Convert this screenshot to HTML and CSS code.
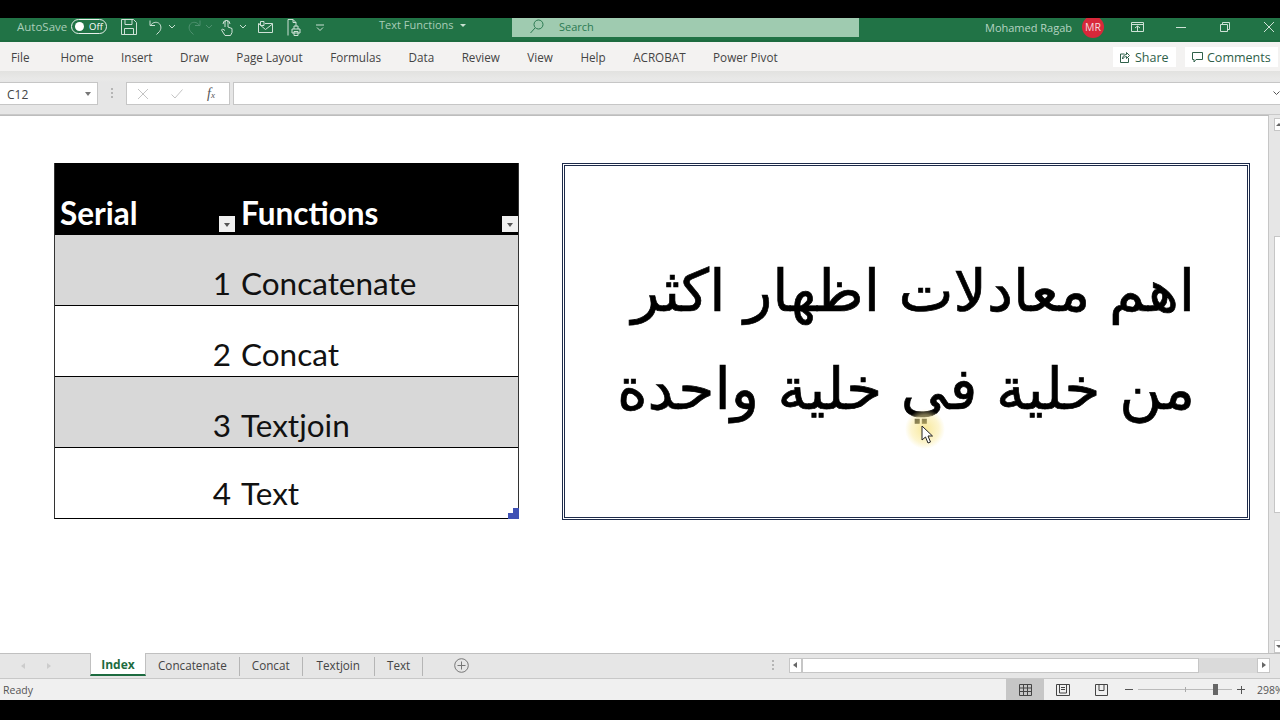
FILE: index.html
```html
<!DOCTYPE html>
<html lang="en">
<head>
    <meta charset="UTF-8">
    <title>Text Functions - Excel</title>
    <link rel="stylesheet" href="styles.css">
</head>
<body>

<div class="topblack"></div>

<div class="titlebar">
    <div class="qat">
        <span class="autosave">AutoSave</span>
        <span class="toggle"><i></i><b>Off</b></span>
        <svg class="qicon save" width="16" height="16" viewBox="0 0 16 16"><path d="M.5.500h12l3 3v12H.5zM4 .5v5h7v-5M3.500 15.500v-6h9v6" /></svg>
        <svg class="qicon undo" width="15" height="16" viewBox="0 0 15 16"><path d="M1 1.500v5h5M1.500 6.500c2-3 5-4 8-2.500 3 2 3 6 1 8.500l-3 3" /></svg>
        <svg class="qcaret c1st" width="6" height="4" viewBox="0 0 6 4"><path d="M0 0l3 3 3-3" /></svg>
        <svg class="qicon redo dim" width="15" height="16" viewBox="0 0 15 16"><path d="M14 1.500v5H9M13.500 6.500c-2-3-5-4-8-2.500-3 2-3 6-1 8.500l3 3" /></svg>
        <svg class="qcaret c1st dim" width="6" height="4" viewBox="0 0 6 4"><path d="M0 0l3 3 3-3" /></svg>
        <svg class="qicon touch" width="12" height="17" viewBox="0 0 12 17"><path d="M4 8V3a1.500 1.500 0 0 1 3 0v5l4 1.500v4l-1.500 3H4L.5 11l1-1L4 11.500M2 5a3.500 3.500 0 0 1 7 0" /></svg>
        <svg class="qcaret c2nd" width="6" height="4" viewBox="0 0 6 4"><path d="M0 0l3 3 3-3" /></svg>
        <svg class="qicon mail" width="15" height="12" viewBox="0 0 15 12"><path d="M7 2.500h7.500v9H.5v-9h1M1 3l6.500 5.500L14.500 3M2.500.5h3.500v4H2.500z" /></svg>
        <svg class="qicon print" width="14" height="17" viewBox="0 0 14 17"><path d="M1 16.500V.5h5l3 3v4M6 .5v3h3M5 10h8v4H5zM7 10V7h4v3M7 12.500h4v4H7z" /></svg>
        <svg class="qcaret more" width="8" height="7" viewBox="0 0 8 7"><path d="M0 1h8M1 3.500l3 3 3-3" /></svg>
    </div>
    <div class="doctitle">Text Functions <span class="doccaret"></span></div>
    <div class="searchbox">
        <svg width="14" height="15" viewBox="0 0 14 15"><circle cx="8.500" cy="5.500" r="4.500" /><path d="M5 9l-4.500 5" /></svg>
        <span>Search</span>
    </div>
    <div class="winside">
        <span class="username">Mohamed Ragab</span>
        <span class="avatar">MR</span>
        <svg class="wicon ribbonopt" width="13" height="10" viewBox="0 0 13 10"><path d="M.5.500h12v9H.5zM.5 2.500h12M4 6l2.500-2L9 6M6.500 4v5" /></svg>
        <svg class="wicon minimize" width="10" height="1" viewBox="0 0 10 1"><path d="M0 .5h10" /></svg>
        <svg class="wicon restore" width="10" height="10" viewBox="0 0 10 10"><path d="M.5 2.500h7v7h-7zM2.500 2.500v-2h7v7h-2" /></svg>
        <svg class="wicon closex" width="10" height="10" viewBox="0 0 10 10"><path d="M0 0l10 10M10 0L0 10" /></svg>
    </div>
</div>

<div class="ribbon">
    <nav class="tabs">
        <span>File</span>
        <span>Home</span>
        <span>Insert</span>
        <span>Draw</span>
        <span>Page Layout</span>
        <span>Formulas</span>
        <span>Data</span>
        <span>Review</span>
        <span>View</span>
        <span>Help</span>
        <span>ACROBAT</span>
        <span>Power Pivot</span>
    </nav>
    <div class="ribbonbtns">
        <span class="ribbonbtn share">
            <svg width="10" height="12" viewBox="0 0 10 12"><path d="M4.500 3H.5v8.500h8V7M2.500 8c0-3 2-4.500 4-4.500V1.500l3 3-3 3v-2C5 5.500 3.500 6.500 2.500 8z" /></svg>
            Share
        </span>
        <span class="ribbonbtn comments">
            <svg width="11" height="11" viewBox="0 0 11 11"><path d="M.5.500h10v7H4L2 10V7.500H.5z" /></svg>
            Comments
        </span>
    </div>
</div>

<div class="formulabar">
    <div class="namebox">C12<span class="namecaret"></span></div>
    <div class="dots"></div>
    <div class="fxbox">
        <svg class="fxcancel" width="10" height="10" viewBox="0 0 10 10"><path d="M0 0l10 10M10 0L0 10" /></svg>
        <svg class="fxenter" width="12" height="10" viewBox="0 0 12 10"><path d="M.5 5.500L4 9l7.500-8.500" /></svg>
        <span class="fxlabel">f<small>x</small></span>
    </div>
    <div class="fxinput"><svg width="7" height="5" viewBox="0 0 7 5"><path d="M.5.500l3 3 3-3" /></svg></div>
</div>

<div class="workarea">
    <div class="sheet">
        <div class="datatable">
            <div class="row head">
                <div class="c1">Serial<span class="filter"></span></div>
                <div class="c2">Functions<span class="filter"></span></div>
            </div>
            <div class="row shade"><div class="c1 num">1</div><div class="c2">Concatenate</div></div>
            <div class="row"><div class="c1 num">2</div><div class="c2">Concat</div></div>
            <div class="row shade"><div class="c1 num">3</div><div class="c2">Textjoin</div></div>
            <div class="row"><div class="c1 num">4</div><div class="c2">Text</div></div>
            <span class="resize"></span>
        </div>
        <div class="textbox" dir="rtl" lang="ar">اهم معادلات اظهار اكثر<br>من خلية في خلية واحدة</div>
        <span class="halo"></span>
        <svg class="pointer" width="12" height="19" viewBox="0 0 12 19"><path d="M1 1v14l3.500-3 2.500 6 2.500-1-2.500-6h4.500z" /></svg>
    </div>
    <div class="vscroll">
        <span class="sbtn up"></span>
        <span class="vthumb"></span>
        <span class="sbtn down"></span>
    </div>
</div>

<div class="tabstrip">
    <div class="tabnav"><span class="navl"></span><span class="navr"></span></div>
    <div class="sheettab active">Index</div>
    <div class="sheettab">Concatenate</div>
    <div class="sheettab">Concat</div>
    <div class="sheettab roomy">Textjoin</div>
    <div class="sheettab">Text</div>
    <svg class="addsheet" width="15" height="15" viewBox="0 0 15 15"><circle cx="7.500" cy="7.500" r="6.800" /><path d="M7.500 3.500v8M3.500 7.500h8" /></svg>
    <div class="tabspacer"></div>
    <div class="dots small"></div>
    <div class="hscroll">
        <span class="hbtn left"></span>
        <span class="hthumb"></span>
        <span class="hbtn right"></span>
    </div>
</div>

<div class="statusbar">
    <span class="ready">Ready</span>
    <div class="viewbtns">
        <span class="viewbtn on">
            <svg width="13" height="12" viewBox="0 0 13 12"><path d="M.5.500h12v11H.5zM.5 4h12M.5 7.500h12M4.500.5v11M8.500.5v11" /></svg>
        </span>
        <span class="viewbtn">
            <svg width="14" height="12" viewBox="0 0 14 12"><path d="M.5.500h13v11H.5zM3.500 1v8h7V1M5 3.500h4M5 5.500h4" /></svg>
        </span>
        <span class="viewbtn">
            <svg width="13" height="12" viewBox="0 0 13 12"><path d="M.5.500h12v11H.5zM4 .5v6h5v-6" /></svg>
        </span>
    </div>
    <div class="zoomctl">
        <span class="zminus"></span>
        <span class="zslider"><i class="ztick"></i><i class="zknob"></i></span>
        <span class="zplus"></span>
    </div>
    <span class="zoomval">298%</span>
</div>

<div class="bottomblack"></div>

</body>
</html>
```

FILE: styles.css
```css
* {
    box-sizing: border-box;
}
html, body {
    margin: 0;
    height: 720px;
    overflow: hidden;
}
body {
    display: flex;
    flex-direction: column;
    width: 1280px;
    background-color: #000;
    font-family: "Open Sans", "Noto Sans", sans-serif;
    font-size: 12px;
    color: #444;
}
svg {
    fill: none;
    stroke: currentColor;
    stroke-width: 1;
    display: block;
    flex: none;
}
.topblack {
    height: 18px;
    background-color: #000;
}
.bottomblack {
    height: 20px;
    background-color: #000;
}

/* title bar */
.titlebar {
    height: 24px;
    background-color: #217346;
    border-bottom: 2px solid #1d6b40;
    display: flex;
    color: #c9e0d2;
    position: relative;
    overflow: hidden;
}
.qat {
    width: 512px;
    display: flex;
    align-items: center;
    padding-left: 17px;
    color: #cfe2d7;
    padding-bottom: 4px;
}
.autosave {
    font-size: 11.500px;
    color: #a9cdb8;
    width: 54px;
    margin-bottom: 2px;
}
.toggle {
    width: 36px;
    height: 15px;
    border: 1px solid #e8f0eb;
    border-radius: 8px;
    display: flex;
    align-items: center;
    padding-left: 3px;
    gap: 5px;
    margin-bottom: 2px;
}
.toggle i {
    width: 9px;
    height: 9px;
    background-color: #fff;
    border-radius: 50%;
}
.toggle b {
    font-size: 9.500px;
    font-weight: 400;
    color: #fff;
}
.qicon.save {
    margin-left: 14px;
}
.qicon.undo {
    margin-left: 12px;
}
.qicon.redo {
    margin-left: 11px;
}
.qicon.touch {
    margin-left: 9px;
}
.qicon.mail {
    margin-left: 12px;
}
.qicon.print {
    margin-left: 14px;
}
.qicon.dim, .qcaret.dim {
    color: #4f9170;
}
.qcaret {
    color: #c9e0d2;
}
.qcaret.c1st {
    margin-left: 5px;
}
.qcaret.c2nd {
    margin-left: 7px;
}
.qcaret.more {
    margin-left: 15px;
}
.doctitle {
    position: absolute;
    left: 379px;
    top: 0;
    line-height: 14px;
    font-size: 11px;
    color: #a9cdb8;
}
.doccaret {
    display: inline-block;
    margin-left: 4px;
    vertical-align: 2px;
    border-top: 3px solid #c9e0d2;
    border-left: 3px solid transparent;
    border-right: 3px solid transparent;
}
.searchbox {
    width: 347px;
    height: 19px;
    background-color: #9fcbb0;
    display: flex;
    align-items: center;
    gap: 15px;
    padding: 0 0 3px 18px;
    color: #2b7a52;
    font-size: 11px;
}
.winside {
    flex: 1;
    display: flex;
    align-items: center;
    padding-left: 126px;
    padding-bottom: 4px;
}
.username {
    font-size: 11px;
    color: #b5d4c2;
    width: 97px;
    white-space: nowrap;
}
.avatar {
    width: 22px;
    height: 22px;
    flex: none;
    border-radius: 50%;
    background-color: #d8283a;
    color: #f5d9dc;
    font-size: 10.500px;
    display: flex;
    align-items: center;
    justify-content: center;
}
.wicon {
    color: #cfe2d7;
}
.ribbonopt {
    margin-left: 27px;
}
.minimize {
    margin-left: 32px;
}
.restore {
    margin-left: 34px;
}
.closex {
    margin-left: 34px;
}

/* ribbon tabs */
.ribbon {
    height: 29px;
    background-color: #f3f2f1;
    display: flex;
    justify-content: space-between;
    align-items: center;
    padding-top: 1px;
}
.tabs {
    display: flex;
    padding-left: 11px;
    font-size: 11.700px;
    color: #444;
}
.tabs span {
    margin-right: 27.500px;
    white-space: nowrap;
}
.tabs span:first-child {
    margin-right: 31px;
}
.ribbonbtns {
    display: flex;
    gap: 9px;
    padding-right: 2px;
}
.ribbonbtn {
    display: flex;
    align-items: center;
    height: 20px;
    background-color: #fff;
    color: #2f6049;
    font-size: 12.500px;
    padding-left: 7px;
}
.ribbonbtn.share {
    width: 63px;
    gap: 5px;
}
.ribbonbtn.comments {
    width: 93px;
    gap: 4px;
}

/* formula bar */
.formulabar {
    height: 44px;
    background: linear-gradient(#e2e2e0, #e9e9e8 8px, #e6e6e6 11px, #e6e6e6);
    display: flex;
    padding: 11px 0 9px;
    border-bottom: 1px solid #c9c9c9;
}
.namebox {
    width: 98px;
    background-color: #fff;
    border: 1px solid #c6c6c6;
    border-left: none;
    font-size: 12px;
    line-height: 22px;
    padding: 1px 0 0 7px;
    position: relative;
}
.namecaret {
    position: absolute;
    right: 6px;
    top: 9px;
    border-top: 4px solid #777;
    border-left: 3.500px solid transparent;
    border-right: 3.500px solid transparent;
}
.dots {
    width: 2px;
    height: 11px;
    margin: 6px 14px 0 13px;
    background: repeating-linear-gradient(#b5b5b5 0, #b5b5b5 2px, transparent 2px, transparent 4px);
}
.fxbox {
    width: 104px;
    background-color: #fff;
    border: 1px solid #c6c6c6;
    display: flex;
    align-items: center;
    padding-left: 11px;
    margin-left: -1px;
    margin-right: 3px;
    color: #c4c4c4;
}
.fxenter {
    margin-left: 23px;
}
.fxlabel {
    margin-left: 24px;
    font-family: "Liberation Serif", serif;
    font-style: italic;
    color: #555;
    font-size: 14px;
}
.fxlabel small {
    font-size: 9px;
}
.fxinput {
    flex: 1;
    background-color: #fff;
    border: 1px solid #c6c6c6;
    border-right: none;
    display: flex;
    align-items: center;
    justify-content: flex-end;
    color: #555;
}

/* sheet */
.workarea {
    height: 539px;
    display: flex;
    background-color: #e6e6e6;
    border-bottom: 1px solid #c0c0c0;
}
.sheet {
    width: 1269px;
    background-color: #fff;
    border-top: 1px solid #bdbdbd;
    border-right: 1px solid #c6c6c6;
    display: flex;
    align-items: flex-start;
    padding: 47px 0 0 54px;
    gap: 43px;
    position: relative;
}
.datatable {
    width: 465px;
    height: 356px;
    border-left: 1px solid #333;
    border-right: 1px solid #333;
    border-bottom: 1px solid #000;
    font-family: Lato, "Open Sans", sans-serif;
    font-size: 31.500px;
    color: #111;
    position: relative;
    flex: none;
}
.row {
    display: flex;
    height: 71px;
    align-items: flex-end;
    border-bottom: 1px solid #000;
    line-height: 36px;
    padding-bottom: 4px;
}
.row:last-of-type {
    border-bottom: none;
    height: 70px;
    padding-bottom: 7px;
}
.row.head {
    height: 72px;
    background-color: #000;
    color: #fff;
    font-weight: 700;
    padding-bottom: 3px;
}
.row.shade {
    background-color: #d8d8d8;
}
.c1 {
    width: 181px;
    padding-left: 5px;
    position: relative;
}
.c1.num {
    text-align: right;
    padding-right: 5px;
}
.c2 {
    flex: 1;
    padding-left: 5px;
    position: relative;
}
.filter {
    position: absolute;
    right: 0;
    bottom: -1px;
    width: 16px;
    height: 16px;
    background-color: #f0f0f0;
}
.c1 .filter {
    right: 1px;
}
.filter::after {
    content: "";
    position: absolute;
    left: 5px;
    top: 7px;
    border-top: 4px solid #555;
    border-left: 3px solid transparent;
    border-right: 3px solid transparent;
}
.resize {
    position: absolute;
    right: -1px;
    bottom: -1px;
    width: 11px;
    height: 11px;
    background: linear-gradient(#3f51b5, #3f51b5) right bottom / 11px 6px no-repeat, linear-gradient(#3f51b5, #3f51b5) right bottom / 6px 11px no-repeat;
}
.textbox {
    width: 688px;
    height: 357px;
    flex: none;
    border: 3px double #1d2a4a;
    font-family: "DejaVu Sans", sans-serif;
    font-size: 58.500px;
    -webkit-text-stroke: 0.7px #000;
    line-height: 98px;
    color: #000;
    padding: 76px 52px 0 0;
    text-align: right;
    white-space: nowrap;
}
.halo {
    position: absolute;
    left: 905px;
    top: 293px;
    width: 40px;
    height: 40px;
    border-radius: 50%;
    background: radial-gradient(closest-side, rgba(246, 225, 120, 0.75), rgba(250, 235, 160, 0.5) 70%, rgba(250, 240, 180, 0));
}
.pointer {
    position: absolute;
    left: 921px;
    top: 309px;
    fill: #fff;
    color: #222;
}
.vscroll {
    flex: 1;
    display: flex;
    flex-direction: column;
    padding: 3px 0 0 5px;
}
.sbtn {
    height: 13px;
    background-color: #fff;
    border: 1px solid #c6c6c6;
    border-right: none;
    display: block;
    position: relative;
}
.sbtn.down {
    margin-top: auto;
}
.sbtn::after {
    content: "";
    position: absolute;
    left: 1px;
    border-left: 3px solid transparent;
    border-right: 3px solid transparent;
}
.sbtn.up::after {
    top: 4px;
    border-bottom: 3px solid #666;
}
.sbtn.down::after {
    top: 4px;
    border-top: 3px solid #666;
}
.vthumb {
    height: 277px;
    margin-top: 105px;
    background-color: #fff;
    border: 1px solid #c6c6c6;
    border-right: none;
}

/* sheet tabs */
.tabstrip {
    height: 25px;
    background-color: #e6e6e6;
    border-bottom: 1px solid #c8c8c8;
    display: flex;
    color: #444;
    font-size: 11.700px;
}
.tabnav {
    width: 90px;
    flex: none;
    display: flex;
    align-items: center;
    gap: 22px;
    padding-left: 21px;
}
.navl, .navr {
    border-top: 3.500px solid transparent;
    border-bottom: 3.500px solid transparent;
}
.navl {
    border-right: 4px solid #ccc;
}
.navr {
    border-left: 4px solid #ccc;
}
.sheettab {
    padding: 0 13px 0 12px;
    height: 22px;
    line-height: 23px;
    position: relative;
    flex: none;
}
.sheettab.roomy {
    padding: 0 15px 0 14px;
}
.sheettab:not(.active)::after {
    content: "";
    position: absolute;
    right: 0;
    top: 3px;
    height: 19px;
    width: 1px;
    background-color: #b5b5b5;
}
.sheettab.active {
    width: 56px;
    padding: 0;
    text-align: center;
    height: 23px;
    margin-top: -1px;
    line-height: 24px;
    font-size: 12px;
    background-color: #fff;
    color: #1d6b40;
    font-weight: 700;
    border-bottom: 2px solid #1d6b40;
    border-left: 1px solid #c0c0c0;
    border-right: 1px solid #c0c0c0;
}
.addsheet {
    margin: 4px 0 0 31px;
    color: #777;
}
.tabspacer {
    flex: 1;
}
.tabstrip .dots.small {
    margin: 6px 15px 0 0;
}
.hscroll {
    width: 481px;
    height: 15px;
    margin: 4px 10px 0 0;
    background-color: #dadada;
    display: flex;
    position: relative;
}
.hbtn {
    width: 13px;
    height: 15px;
    background-color: #fff;
    border: 1px solid #c6c6c6;
    position: relative;
}
.hbtn.right {
    margin-left: auto;
}
.hbtn::after {
    content: "";
    position: absolute;
    top: 3px;
    border-top: 3.500px solid transparent;
    border-bottom: 3.500px solid transparent;
}
.hbtn.left::after {
    left: 3px;
    border-right: 4px solid #666;
}
.hbtn.right::after {
    left: 4px;
    border-left: 4px solid #666;
}
.hthumb {
    width: 397px;
    background-color: #fff;
    border: 1px solid #c6c6c6;
}

/* status bar */
.statusbar {
    height: 21px;
    background-color: #f0f0f0;
    display: flex;
    align-items: center;
    font-size: 10.500px;
    color: #555;
    overflow: hidden;
}
.ready {
    padding-left: 3px;
    width: 1006px;
    flex: none;
}
.viewbtns {
    display: flex;
    align-items: stretch;
    height: 21px;
    color: #444;
    flex: none;
}
.viewbtn {
    width: 38px;
    display: flex;
    align-items: center;
    justify-content: center;
}
.viewbtn.on {
    background-color: #c6c6c6;
}
.zoomctl {
    display: flex;
    align-items: center;
    margin-left: 5px;
    flex: none;
}
.zminus, .zplus {
    width: 8px;
    height: 1px;
    background-color: #555;
    position: relative;
}
.zplus::after {
    content: "";
    position: absolute;
    left: 3.500px;
    top: -3.500px;
    width: 1px;
    height: 8px;
    background-color: #555;
}
.zslider {
    width: 94px;
    height: 1px;
    margin: 0 5px;
    background-color: #bbb;
    position: relative;
}
.ztick {
    position: absolute;
    left: 47px;
    top: -2px;
    width: 1px;
    height: 5px;
    background-color: #aaa;
}
.zknob {
    position: absolute;
    left: 75px;
    top: -5px;
    width: 5px;
    height: 11px;
    background-color: #666;
}
.zoomval {
    margin-left: 12px;
    white-space: nowrap;
    flex: none;
}
```
